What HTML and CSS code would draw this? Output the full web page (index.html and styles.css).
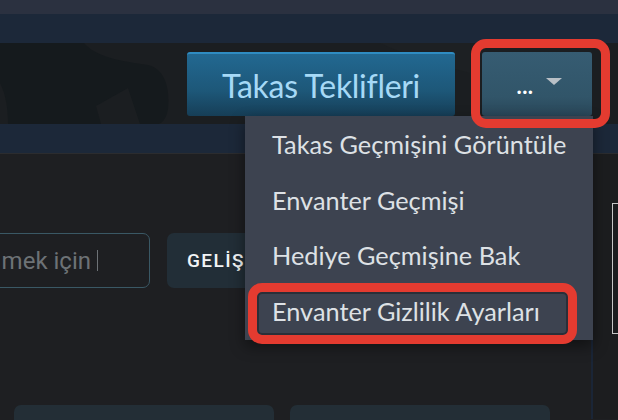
FILE: index.html
```html
<!DOCTYPE html>
<html lang="tr">

<head>
    <meta charset="UTF-8">
    <meta name="viewport" content="width=device-width, initial-scale=1.0">
    <title>Envanter</title>
    <link rel="stylesheet" href="styles.css">
</head>

<body>
    <div class="page">
        <div class="topbar"></div>
        <div class="navstrip"></div>

        <div class="hero">
            <!-- faint artwork behind the profile header -->
            <svg class="hero-art" width="618" height="81" viewBox="0 0 618 81">
                <rect width="618" height="81" fill="#1b1e21"/>
                <path d="M0 0 H84 C96 14 120 18 148 22 C166 26 170 48 168 66 C166 78 160 81 158 81 H0 Z" fill="#151a1d"/>
                <path d="M96 63 L128 45 L140 81 H101 Z" fill="#1b1e21"/>
                <path d="M0 40 C6 52 8 66 8 81 H0 Z" fill="#1b1e21"/>
                <path d="M380 0 H470 V30 C440 22 410 14 380 0 Z" fill="#1d2023"/>
            </svg>
            <button class="btn-offers">Takas Teklifleri</button>
            <button class="btn-more"><span class="dots">...</span><span class="caret"></span></button>
        </div>

        <div class="subnav"></div>

        <div class="main">
            <div class="content">
                <div class="search-row">
                    <div class="search-box">
                        <span class="placeholder">mek için</span>
                        <span class="cursor"></span>
                    </div>
                    <!-- the rest of this button sits under the open menu -->
                    <button class="btn-advanced">GELİŞMİŞ</button>
                </div>
                <div class="cards">
                    <div class="card"></div>
                    <div class="card"></div>
                </div>
            </div>
            <div class="side-stripe"></div>
            <div class="side">
                <div class="side-box"></div>
            </div>
        </div>

        <ul class="dropdown">
            <li>Takas Geçmişini Görüntüle</li>
            <li>Envanter Geçmişi</li>
            <li>Hediye Geçmişine Bak</li>
            <li class="active">Envanter Gizlilik Ayarları</li>
        </ul>

        <!-- red callouts -->
        <div class="callout callout-more"></div>
        <div class="callout callout-item"></div>
    </div>
</body>

</html>
```

FILE: styles.css
```css
* {
    box-sizing: border-box;
}

body {
    margin: 0;
    background-color: #1e1f22;
    font-family: Lato, "Open Sans", sans-serif;
}

.page {
    position: relative;
    width: 618px;
    height: 420px;
    overflow: hidden;
}

.topbar {
    height: 14px;
    background-color: #2b3140;
}

.navstrip {
    height: 29px;
    background-color: #1c2839;
}

.hero {
    position: relative;
    height: 81px;
    display: flex;
    justify-content: flex-end;
    align-items: flex-start;
    gap: 27px;
    padding: 9px 26px 0 0;
}

.hero-art {
    position: absolute;
    left: 0;
    top: 0;
}

.hero button {
    position: relative;
    height: 64px;
    border: none;
    border-radius: 3px;
    cursor: pointer;
    font-family: inherit;
    flex-shrink: 0;
}

.btn-offers {
    width: 268px;
    padding: 0;
    background: linear-gradient(to bottom, #226891 0%, #1d5778 60%, #163e57 100%);
    border-top: 2px solid #2f8cc2 !important;
    color: #a6d9f6;
    font-size: 32px;
    letter-spacing: -0.3px;
}

.btn-more {
    width: 110px;
    display: flex;
    align-items: center;
    justify-content: center;
    gap: 12px;
    padding: 0 0 0 4px;
    background: linear-gradient(to bottom, #365c72 0%, #315569 70%, #294658 100%);
}

.dots {
    color: #ffffff;
    font-size: 22px;
    font-weight: bold;
    line-height: 1;
    margin-top: 4px;
    letter-spacing: 0.5px;
}

.caret {
    width: 0;
    height: 0;
    border-left: 8px solid transparent;
    border-right: 8px solid transparent;
    border-top: 7px solid #b9c0c6;
    margin-top: -6px;
}

.subnav {
    height: 30px;
    background-color: #1c2839;
    border-bottom: 1px solid #2b2c2f;
}

.main {
    display: flex;
    height: 265px;
}

.content {
    width: 591px;
    flex-shrink: 0;
    padding-top: 79px;
}

.search-row {
    display: flex;
    gap: 17px;
    height: 55px;
}

.search-box {
    width: 200px;
    margin-left: -50px;
    border: 1.5px solid #3a5865;
    border-radius: 7px;
    display: flex;
    align-items: center;
    justify-content: flex-end;
    padding-right: 51px;
    gap: 6px;
}

.placeholder {
    color: #6d7276;
    font-size: 24px;
    font-family: Roboto, sans-serif;
}

.cursor {
    width: 1px;
    height: 21px;
    background-color: #6d7276;
}

.btn-advanced {
    width: 78px;
    overflow: hidden;
    white-space: nowrap;
    border: none;
    border-radius: 7px 0 0 7px;
    background-color: #222e37;
    color: #f2f4f5;
    font-family: Roboto, sans-serif;
    font-size: 19px;
    font-weight: 500;
    letter-spacing: 1.4px;
    text-align: left;
    padding-left: 20px;
}

.cards {
    display: flex;
    gap: 16px;
    margin-top: 117px;
    padding-left: 14px;
}

.card {
    width: 260px;
    height: 40px;
    background-color: #232e36;
    border-radius: 7px;
}

.side-stripe {
    width: 2px;
    flex-shrink: 0;
    background-color: #1a2536;
}

.side {
    flex: 1;
    min-width: 0;
    background-color: #1c1d1f;
    padding: 49px 0 0 19px;
}

.side-box {
    width: 40px;
    height: 131px;
    border: 1.5px solid #c6c6c6;
}

.dropdown {
    position: absolute;
    left: 245px;
    top: 116px;
    width: 348px;
    margin: 0;
    padding: 1px 0;
    list-style: none;
    background-color: #3d4350;
    box-shadow: 0 6px 14px rgba(0, 0, 0, 0.45);
}

.dropdown li {
    height: 55.5px;
    line-height: 55.5px;
    padding-left: 27px;
    color: #dde1e5;
    font-size: 25.3px;
    white-space: nowrap;
}

/* red annotation frames */
.callout {
    position: absolute;
    border: 9px solid #e43b30;
    border-radius: 15px;
    box-shadow: inset 0 0 0 2px #2a2f38;
}

.callout-more {
    left: 471px;
    top: 39px;
    width: 139px;
    height: 89px;
    box-shadow: none;
}

.callout-item {
    left: 248px;
    top: 283px;
    width: 329px;
    height: 61px;
    border-radius: 14px;
}
```
